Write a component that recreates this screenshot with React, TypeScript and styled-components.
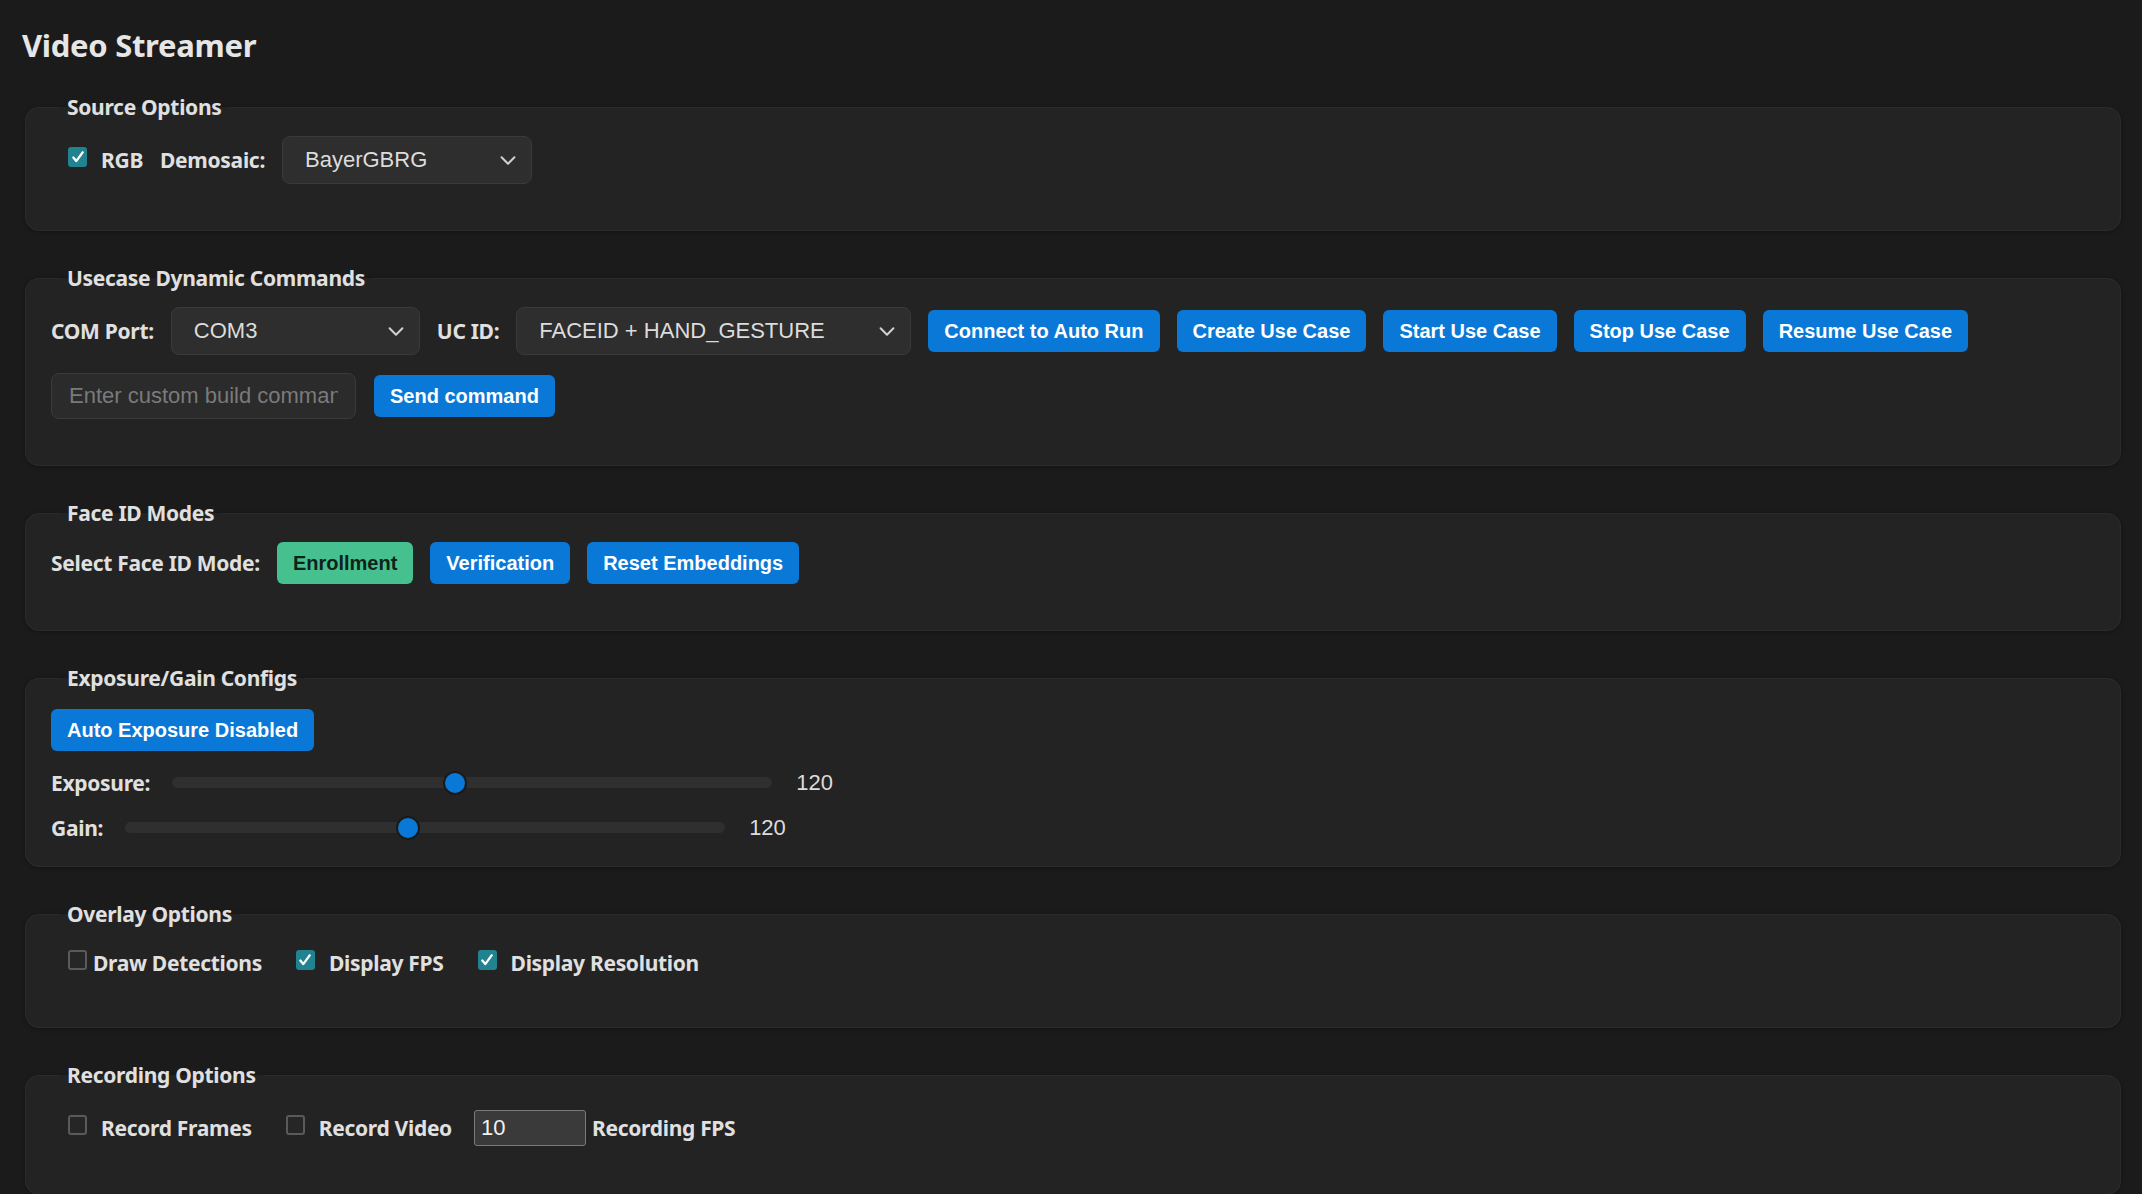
import React, { useState } from 'react';
import styled, { createGlobalStyle } from 'styled-components';

const GlobalStyle = createGlobalStyle`
  body {
    margin: 0;
    background: #1b1b1b;
    color: #e0e0e0;
    font-family: "Noto Sans", "Open Sans", sans-serif;
  }
`;

const Page = styled.div`
  padding: 22px 21px 24px 25px;
`;

const Title = styled.h1`
  margin: 0 0 24px -3px;
  font-size: 31px;
  line-height: 46px;
  font-weight: 700;
  color: #e6e6e6;
  letter-spacing: -0.3px;
`;

const Fieldset = styled.fieldset<{ $pb?: number }>`
  margin: 0 0 32px;
  padding: 14px 25px ${p => p.$pb ?? 46}px;
  border: 1px solid #2b2b2b;
  border-radius: 14px;
  background: #232323;
  box-shadow: 0 1px 4px rgba(0, 0, 0, 0.3);
`;

const Legend = styled.legend`
  margin-left: 8px;
  padding: 0 8px;
  font-size: 21px;
  line-height: 30px;
  font-weight: 700;
  color: #e0e0e0;
  letter-spacing: -0.3px;
`;

const Row = styled.div<{ $gap?: number; $mt?: number; $ml?: number }>`
  display: flex;
  align-items: center;
  gap: ${p => p.$gap ?? 18}px;
  margin-top: ${p => p.$mt ?? 0}px;
  margin-left: ${p => p.$ml ?? 0}px;
`;

const Label = styled.span`
  font-size: 21px;
  font-weight: 700;
  color: #e0e0e0;
  letter-spacing: -0.3px;
  white-space: nowrap;
`;

const SelectBox = styled.div<{ $w: number }>`
  width: ${p => p.$w}px;
  height: 48px;
  box-sizing: border-box;
  display: flex;
  align-items: center;
  justify-content: space-between;
  padding: 0 12px 0 22px;
  background: #2e2e2e;
  border: 1px solid #3a3a3a;
  border-radius: 8px;
  font-family: "Liberation Sans", Arial, sans-serif;
  font-size: 22px;
  color: #dcdcdc;
`;

const Button = styled.button<{ $green?: boolean }>`
  height: 42px;
  padding: 0 16px;
  border: none;
  border-radius: 6px;
  background: ${p => (p.$green ? '#45c08e' : '#0a78d6')};
  color: ${p => (p.$green ? '#10231a' : '#ffffff')};
  font-family: "Liberation Sans", Arial, sans-serif;
  font-size: 20px;
  font-weight: 700;
  white-space: nowrap;
  cursor: pointer;
`;

const TextInput = styled.input`
  width: 305px;
  height: 46px;
  box-sizing: border-box;
  padding: 0 17px;
  background: #2b2b2b;
  border: 1px solid #3a3a3a;
  border-radius: 8px;
  font-family: "Liberation Sans", Arial, sans-serif;
  font-size: 22px;
  color: #ddd;
  outline: none;
  &::placeholder { color: #7a7a7a; }
`;

const SmallInput = styled.input`
  width: 112px;
  height: 36px;
  box-sizing: border-box;
  padding: 0 6px;
  background: #3a3a3a;
  border: 1px solid #7a7a7a;
  border-radius: 3px;
  font-family: "Liberation Sans", Arial, sans-serif;
  font-size: 22px;
  color: #f0f0f0;
  outline: none;
`;

const CheckWrap = styled.label<{ $gap?: number }>`
  display: inline-flex;
  align-items: center;
  gap: ${p => p.$gap ?? 14}px;
  cursor: pointer;
`;

const Box = styled.span<{ $on: boolean }>`
  width: 19px;
  height: 20px;
  box-sizing: border-box;
  border-radius: 3px;
  border: ${p => (p.$on ? 'none' : '2px solid #5a5a5a')};
  background: ${p => (p.$on ? '#21838f' : '#262626')};
  display: inline-flex;
  align-items: center;
  justify-content: center;
  margin-top: -6px;
`;

const SliderRow = styled.div<{ $mt?: number }>`
  display: flex;
  align-items: center;
  gap: 22px;
  height: 45px;
  margin-top: ${p => p.$mt ?? 0}px;
`;

const Range = styled.input`
  -webkit-appearance: none;
  appearance: none;
  width: 600px;
  height: 11px;
  margin: 0;
  border-radius: 6px;
  background: #2f2f2f;
  outline: none;
  &::-webkit-slider-thumb {
    -webkit-appearance: none;
    width: 24px;
    height: 24px;
    border-radius: 50%;
    background: #0a78d6;
    border: 2px solid #1a1a1a;
  }
`;

const Value = styled.span`
  font-family: "Liberation Sans", Arial, sans-serif;
  font-size: 22px;
  color: #dcdcdc;
  margin-left: 2px;
`;

const Chevron = () => (
  <svg width="22" height="22" viewBox="0 0 24 24" fill="none" stroke="#d0d0d0" strokeWidth="2.2" strokeLinecap="round" strokeLinejoin="round">
    <path d="M5 9l7 7 7-7" />
  </svg>
);

const Check: React.FC<{ on: boolean; label: string; gap?: number }> = ({ on, label, gap }) => (
  <CheckWrap $gap={gap}>
    <Box $on={on}>
      {on && (
        <svg width="14" height="14" viewBox="0 0 24 24" fill="none" stroke="#fff" strokeWidth="4" strokeLinecap="round" strokeLinejoin="round">
          <path d="M4 13l5 6L20 4" />
        </svg>
      )}
    </Box>
    <Label>{label}</Label>
  </CheckWrap>
);

const App: React.FC = () => {
  const [exposure, setExposure] = useState(120);
  const [gain, setGain] = useState(120);

  return (
    <Page>
      <GlobalStyle />
      <Title>Video Streamer</Title>

      <Fieldset>
        <Legend>Source Options</Legend>
        <Row $gap={17} $ml={17}>
          <Check on label="RGB" />
          <Label>Demosaic:</Label>
          <SelectBox $w={250}>BayerGBRG<Chevron /></SelectBox>
        </Row>
      </Fieldset>

      <Fieldset>
        <Legend>Usecase Dynamic Commands</Legend>
        <Row $gap={17}>
          <Label>COM Port:</Label>
          <SelectBox $w={249}>COM3<Chevron /></SelectBox>
          <Label>UC ID:</Label>
          <SelectBox $w={395}>FACEID + HAND_GESTURE<Chevron /></SelectBox>
          <Button>Connect to Auto Run</Button>
          <Button>Create Use Case</Button>
          <Button>Start Use Case</Button>
          <Button>Stop Use Case</Button>
          <Button>Resume Use Case</Button>
        </Row>
        <Row $mt={18}>
          <TextInput placeholder="Enter custom build command" />
          <Button>Send command</Button>
        </Row>
      </Fieldset>

      <Fieldset>
        <Legend>Face ID Modes</Legend>
        <Row $gap={17}>
          <Label>Select Face ID Mode:</Label>
          <Button $green>Enrollment</Button>
          <Button>Verification</Button>
          <Button>Reset Embeddings</Button>
        </Row>
      </Fieldset>

      <Fieldset $pb={16}>
        <Legend>Exposure/Gain Configs</Legend>
        <Row $mt={2}>
          <Button>Auto Exposure Disabled</Button>
        </Row>
        <SliderRow $mt={9}>
          <Label>Exposure:</Label>
          <Range type="range" min={0} max={255} value={exposure} onChange={e => setExposure(+e.target.value)} />
          <Value>{exposure}</Value>
        </SliderRow>
        <SliderRow>
          <Label>Gain:</Label>
          <Range type="range" min={0} max={255} value={gain} onChange={e => setGain(+e.target.value)} />
          <Value>{gain}</Value>
        </SliderRow>
      </Fieldset>

      <Fieldset $pb={50}>
        <Legend>Overlay Options</Legend>
        <Row $gap={34} $mt={6} $ml={17}>
          <Check on={false} label="Draw Detections" gap={6} />
          <Check on label="Display FPS" />
          <Check on label="Display Resolution" />
        </Row>
      </Fieldset>

      <Fieldset $pb={48}>
        <Legend>Recording Options</Legend>
        <Row $gap={34} $mt={6} $ml={17}>
          <Check on={false} label="Record Frames" />
          <Check on={false} label="Record Video" />
          <Row $gap={6} $ml={-12}>
            <SmallInput defaultValue="10" />
            <Label>Recording FPS</Label>
          </Row>
        </Row>
      </Fieldset>
    </Page>
  );
};

export default App;
